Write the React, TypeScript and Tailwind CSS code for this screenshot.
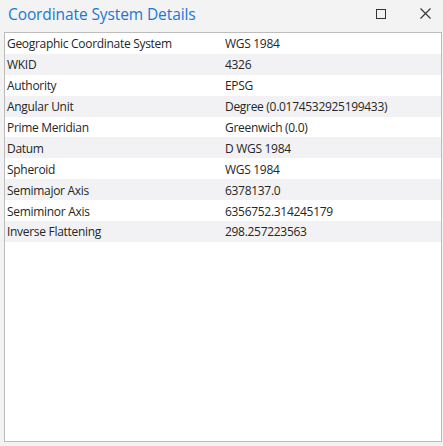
import React from "react";

const rows: [string, string][] = [
  ["Geographic Coordinate System", "WGS 1984"],
  ["WKID", "4326"],
  ["Authority", "EPSG"],
  ["Angular Unit", "Degree (0.0174532925199433)"],
  ["Prime Meridian", "Greenwich (0.0)"],
  ["Datum", "D WGS 1984"],
  ["Spheroid", "WGS 1984"],
  ["Semimajor Axis", "6378137.0"],
  ["Semiminor Axis", "6356752.314245179"],
  ["Inverse Flattening", "298.257223563"],
];

export default function App() {
  return (
    <div
      className="w-[443px] h-[446px] bg-[#f3f3f3] flex flex-col overflow-hidden"
      style={{ fontFamily: '"Open Sans", "Noto Sans", sans-serif' }}
    >
      <div className="h-[32px] flex items-center pl-[8px] pr-[12px]">
        <div className="flex-1 text-[15.5px] leading-none text-[#1a78d2] tracking-[-0.1px] pb-[2px]">
          Coordinate System Details
        </div>
        <svg width="10" height="10" viewBox="0 0 10 10" className="mr-[34px] mb-[5px]">
          <rect x="0.5" y="0.5" width="9" height="9" fill="none" stroke="#333" strokeWidth="1" />
        </svg>
        <svg width="11" height="11" viewBox="0 0 11 11" className="mb-[5px]">
          <path d="M0.5 0.5 L10.5 10.5 M10.5 0.5 L0.5 10.5" stroke="#333" strokeWidth="1.1" />
        </svg>
      </div>
      <div className="ml-[4px] mr-[1px] h-[410px] border border-[#bcbcbc] bg-white flex flex-col">
        {rows.map(([k, v], i) => (
          <div
            key={k}
            className={`h-[20.9px] flex items-center pt-[2px] text-[12px] text-[#262626] ${
              i % 2 === 1 ? "bg-[#f2f2f4]" : "bg-white"
            }`}
          >
            <div className="w-[220px] pl-[2px] tracking-[-0.3px]">{k}</div>
            <div className="tracking-[-0.3px]">{v}</div>
          </div>
        ))}
      </div>
    </div>
  );
}
